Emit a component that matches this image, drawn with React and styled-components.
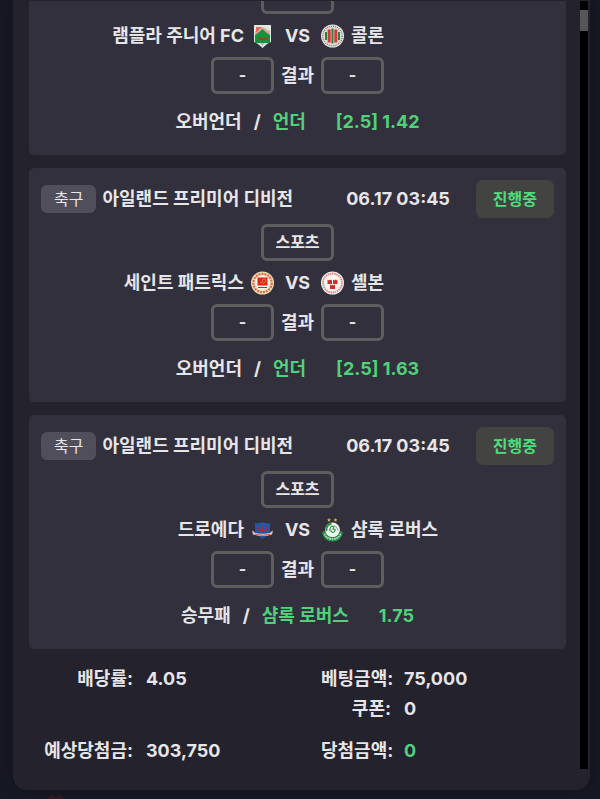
import React from "react";
import styled, { createGlobalStyle } from "styled-components";

const Global = createGlobalStyle`
  * { box-sizing: border-box; }
  html, body { margin: 0; background: #171a25; }
  body {
    font-family: Inter, "Noto Sans CJK KR", sans-serif;
    font-size: 18px;
    font-weight: 700;
    line-height: 28px;
    color: #e6e6e9;
  }
`;

const Page = styled.div`
  height: 100vh;
  display: flex;
  flex-direction: column;
  overflow: hidden;
  padding: 0 10px 0 13px;
`;

const Panel = styled.main`
  flex: 1;
  min-height: 0;
  display: flex;
  gap: 14px;
  padding: 1px 2px 21px 16px;
  background: #24222d;
  border-radius: 0 0 14px 14px;
  box-shadow: 0 0 16px #10121a;
`;

const Scroller = styled.div`
  flex: 1;
  min-width: 0;
  display: flex;
  flex-direction: column;
  justify-content: flex-end;
  overflow: hidden;
`;

const ScrollTrack = styled.div`
  width: 8px;
  padding-top: 9px;
  background: #000;
`;

const ScrollThumb = styled.div`
  height: 21px;
  background: #565656;
`;

const CardList = styled.div`
  display: flex;
  flex-direction: column;
  gap: 13px;
`;

const Card = styled.article`
  display: flex;
  flex-direction: column;
  align-items: center;
  padding: 12px;
  border-radius: 5px;
  background: #33303d;
`;

const CardHeader = styled.header`
  align-self: stretch;
  display: flex;
  align-items: center;
  margin-bottom: 6px;
`;

const SportTag = styled.span`
  padding: 0 13px;
  margin-right: 6px;
  border-radius: 6px;
  background: #514e5b;
  font-size: 16px;
  font-weight: 400;
`;

const League = styled.h2`
  margin: 0;
  font-size: inherit;
  font-weight: inherit;
`;

const Kickoff = styled.time`
  margin: 0 26px 0 auto;
`;

const Status = styled.span`
  padding: 0 17px;
  border-radius: 7px;
  background: #434342;
  color: #4fdc7c;
  font-size: 16px;
  line-height: 38px;
`;

const Box = styled.div`
  min-width: ${(p) => (p.$score ? "63px" : "73px")};
  border: 3px solid #5f5e5e;
  border-radius: 6px;
  font-size: 16px;
  line-height: 31px;
  text-align: center;
`;

const Versus = styled.div`
  align-self: stretch;
  display: grid;
  grid-template-columns: 1fr 47px 1fr;
  align-items: center;
  min-height: ${(p) => (p.$tall ? "43px" : "37px")};
  text-align: center;
`;

const Side = styled.div`
  display: flex;
  align-items: center;
  justify-content: ${(p) => (p.$home ? "flex-end" : "flex-start")};
  gap: 7px;
`;

const Pick = styled.div`
  display: flex;
  gap: 12px;
  padding: 14px 0 7px;
`;

const Choice = styled.strong`
  display: flex;
  gap: 30px;
  font-weight: inherit;
  color: #50d27a;
`;

const Summary = styled.dl`
  display: grid;
  grid-template-columns: 104px 1fr 70px 1fr;
  column-gap: 13px;
  margin: 0;
  padding: 15px 0 3px;
  line-height: 30px;
`;

const Label = styled.dt`
  grid-column: ${(p) => p.$col};
  margin-top: ${(p) => (p.$last ? "12px" : "0")};
  text-align: right;
  white-space: nowrap;
`;

const Value = styled.dd`
  margin: ${(p) => (p.$last ? "12px 0 0" : "0")};
  color: ${(p) => (p.$win ? "#50d27a" : "inherit")};
`;

const Behind = styled.div`
  height: 9px;
  padding: 5px 35px 0;
  overflow: hidden;
`;

const HeartIcon = styled.svg`
  display: block;
  width: 16px;
  height: 14px;
`;

const Crest = styled.svg`
  flex: none;
  width: 23px;
  height: 24px;
`;

function RamplaCrest() {
  return (
    <Crest viewBox="0 0 23 24" aria-hidden="true">
      <path d="M3 1h17v17l-4 2-4.500 4-4.500-4-4-2z" fill="#e2e8df" />
      <path d="M5 3h6L5 9z" fill="#e66a5a" />
      <path d="M4 7l7.500-4L19 7v8l-2 3H6l-2-3z" fill="#c9756a" opacity=".5" />
      <path d="M4 11l3-2 4.500-4L16 9l3 2v8H4z" fill="#14923c" />
      <path d="M7 14l2-1 3 1 3-1 2 1-2 2H8z" fill="#8a4b25" />
      <path d="M9 19h5l-2.500 3z" fill="#a9bcc5" />
    </Crest>
  );
}

function ColonCrest() {
  return (
    <Crest viewBox="0 0 23 24" aria-hidden="true">
      <circle cx="11.500" cy="12" r="11.500" fill="#e8e8e2" />
      <circle cx="11.500" cy="12" r="9.700" fill="none" stroke="#777775" strokeWidth="1.500" strokeDasharray="1 1" />
      <circle cx="11.500" cy="12" r="8" fill="#d9d2c4" />
      <path d="M5 8v8M11.500 4.500v15M18 8v8" stroke="#248344" strokeWidth="2" />
      <path d="M8.200 5.500v13M14.800 5.500v13" stroke="#d8383a" strokeWidth="3" />
    </Crest>
  );
}

function StPatricksCrest() {
  return (
    <Crest viewBox="0 0 23 24" aria-hidden="true">
      <circle cx="11.500" cy="12" r="11.500" fill="#f0dfb4" />
      <circle cx="11.500" cy="12" r="9.200" fill="none" stroke="#dc6a50" strokeWidth="2.200" strokeDasharray="2 1" />
      <circle cx="11.500" cy="12" r="7.500" fill="#f8eee2" />
      <path d="M6.500 6.500h10v8h-10z" fill="#de2520" />
      <path d="M9 12l3-1-1-2 3-1 1 2-3 3" fill="none" stroke="#ee7428" strokeWidth="1" />
      <path d="M7 16.500h9" stroke="#8d4256" strokeWidth="1" />
    </Crest>
  );
}

function ShelbourneCrest() {
  return (
    <Crest viewBox="0 0 23 24" aria-hidden="true">
      <circle cx="11.500" cy="12" r="11.500" fill="#f7efed" />
      <circle cx="11.500" cy="12" r="9.500" fill="none" stroke="#dd8580" strokeWidth="1.800" strokeDasharray="1.500 .7" />
      <circle cx="11.500" cy="12" r="7.800" fill="#faf5f3" />
      <path d="M6.500 8.500l1.500 1 1-1 2 1V13H6.500zM12 8.500l1.500 1 1-1 2 1V13H12zM9 13.500l1.500 1 1-1 1 1 1.500-1V18H9z" fill="#d22c2b" />
    </Crest>
  );
}

function DroghedaCrest() {
  return (
    <Crest viewBox="0 0 23 24" aria-hidden="true">
      <path d="M4 5q4 1 7.500-1Q15 6 19 5v8q-1 5-7.500 7Q5 18 4 13z" fill="#1f59a6" />
      <path d="M7.500 9q0 4 4 4t4-4M11.500 7v6" fill="none" stroke="#a02c49" strokeWidth="2" />
      <path d="M1 12.500q2 1 3 2.200 7.500 2 15 0 1-1.200 3-2.200l-1 4q-9.500 3-19 0z" fill="#e3b9bc" />
      <path d="M4 16.300q7.500 2 15 0" fill="none" stroke="#c56775" strokeWidth="1" />
      <path d="M9 19h5l-2.500 2z" fill="#1f59a6" />
    </Crest>
  );
}

function ShamrockCrest() {
  return (
    <Crest viewBox="0 0 23 24" aria-hidden="true">
      <path d="M8 0l.6 1.200 1.300.2-1 .9.300 1.400L8 3l-1.200.7.3-1.400-1-.9 1.300-.2zM14.500 0l.6 1.200 1.300.2-1 .9.300 1.400-1.200-.7-1.200.7.300-1.400-1-.9 1.300-.2z" fill="#d7b65a" />
      <circle cx="11.500" cy="12" r="7.500" fill="#eef5ee" />
      <path d="M5.500 13q-1-6 5-7.500" fill="none" stroke="#299449" strokeWidth="2" />
      <path d="M13 7.500q4 2 4 5" fill="none" stroke="#68b27a" strokeWidth="1" />
      <path d="M11 8q3 0 1 3 4 0 1 3-2 1-3-1-2 0-1-2 0-2 2-3z" fill="none" stroke="#2d974c" strokeWidth="1.200" />
      <path d="M1 14l3-1q1.500 6 7.500 6t7.500-6l3 1q-1.500 9.500-10.500 9.500T1 14z" fill="#24944a" />
      <path d="M3.500 16q2 5 8 5t8-5" fill="none" stroke="#d8ecd9" strokeWidth="1.500" strokeDasharray="1.500 .8" />
    </Crest>
  );
}

const bets = [
  { home: "램플라 주니어 FC", away: "콜론", HomeCrest: RamplaCrest, AwayCrest: ColonCrest, market: "오버언더", pick: "언더", odds: "[2.5] 1.42" },
  { league: "아일랜드 프리미어 디비전", time: "06.17 03:45", home: "세인트 패트릭스", away: "셸본", HomeCrest: StPatricksCrest, AwayCrest: ShelbourneCrest, market: "오버언더", pick: "언더", odds: "[2.5] 1.63" },
  { league: "아일랜드 프리미어 디비전", time: "06.17 03:45", home: "드로에다", away: "샴록 로버스", HomeCrest: DroghedaCrest, AwayCrest: ShamrockCrest, market: "승무패", pick: "샴록 로버스", odds: "1.75" },
];

function BetCard({ bet }) {
  const { HomeCrest, AwayCrest } = bet;
  return (
    <Card>
      {bet.league && (
        <CardHeader>
          <SportTag>축구</SportTag>
          <League>{bet.league}</League>
          <Kickoff>{bet.time}</Kickoff>
          <Status>진행중</Status>
        </CardHeader>
      )}
      <Box>스포츠</Box>
      <Versus $tall>
        <Side $home><span>{bet.home}</span><HomeCrest /></Side>
        <span>VS</span>
        <Side><AwayCrest /><span>{bet.away}</span></Side>
      </Versus>
      <Versus>
        <Side $home><Box $score>-</Box></Side>
        <span>결과</span>
        <Side><Box $score>-</Box></Side>
      </Versus>
      <Pick>
        <span>{bet.market}</span>
        <span>/</span>
        <Choice><span>{bet.pick}</span><span>{bet.odds}</span></Choice>
      </Pick>
    </Card>
  );
}

export default function App() {
  return (
    <>
      <Global />
      <Page>
        <Panel>
          <Scroller>
            <CardList>
              {bets.map((bet) => <BetCard key={bet.home} bet={bet} />)}
            </CardList>
            <Summary>
              <Label $col={1}>배당률:</Label>
              <Value>4.05</Value>
              <Label $col={3}>베팅금액:</Label>
              <Value>75,000</Value>
              <Label $col={3}>쿠폰:</Label>
              <Value>0</Value>
              <Label $col={1} $last>예상당첨금:</Label>
              <Value $last>303,750</Value>
              <Label $col={3} $last>당첨금액:</Label>
              <Value $last $win>0</Value>
            </Summary>
          </Scroller>
          <ScrollTrack><ScrollThumb /></ScrollTrack>
        </Panel>
        <Behind>
          <HeartIcon viewBox="0 0 16 14" aria-hidden="true">
            <path d="M8 14L1 7Q-1 1 4 0q3 0 4 2 1-2 4-2 5 1 3 7z" fill="#2e1722" />
          </HeartIcon>
        </Behind>
      </Page>
    </>
  );
}
